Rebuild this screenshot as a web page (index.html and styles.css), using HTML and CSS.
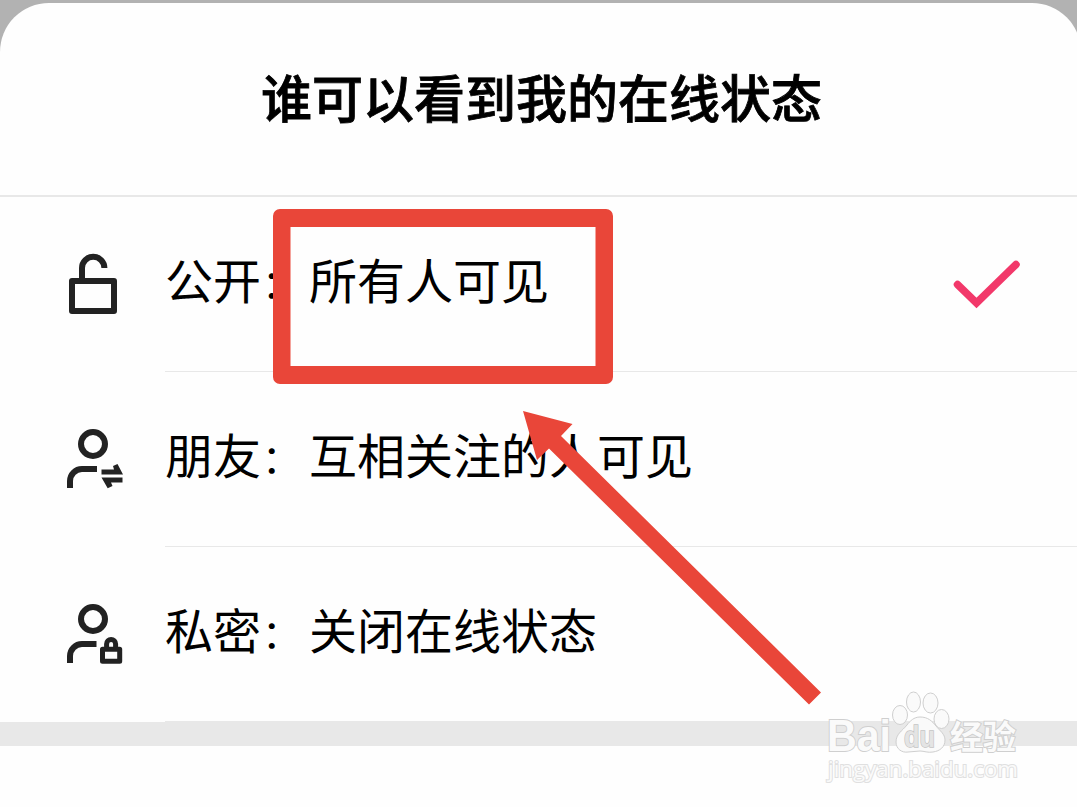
FILE: index.html
```
<!DOCTYPE html>
<html lang="zh-CN">

<head>
    <meta charset="UTF-8" />
    <meta name="viewport" content="width=device-width, initial-scale=1.0" />
    <title>谁可以看到我的在线状态</title>
    <link rel="stylesheet" href="styles.css">
</head>

<body>
    <div class="sheet">
        <div class="header">
            <h1>谁可以看到我的在线状态</h1>
        </div>
        <div class="option">
            <svg class="icon" viewBox="0 0 64 64">
                <rect x="10" y="29" width="42" height="30" />
                <path d="M20 28V16a11.2 11.2 0 0 1 22.4 0" />
            </svg>
            <div class="option-body">
                <div class="label">公开<span class="colon">：</span>所有人可见</div>
                <svg class="check" viewBox="0 0 70 54">
                    <path d="M7.500 28.500l19 18.500L66 8.500" />
                </svg>
            </div>
        </div>
        <div class="option">
            <svg class="icon" viewBox="0 0 64 64">
                <circle cx="31" cy="17" r="12" />
                <path d="M8 61V54a12 12 0 0 1 12-12H35" />
                <path class="solid" d="M39.500 42.500H52l-1-3.500 4.500-2 5.500 10.500H39.500z" />
                <path class="solid" d="M60.500 50.500v5H49l1.500 3.500-4.800 2.200L39.500 50.500z" />
            </svg>
            <div class="option-body">
                <div class="label">朋友<span class="colon">：</span>互相关注的人可见</div>
            </div>
        </div>
        <div class="option">
            <svg class="icon" viewBox="0 0 64 64">
                <circle cx="31" cy="17" r="12" />
                <path d="M8 61V54a12 12 0 0 1 12-12H34.500" />
                <rect class="thin" x="40.500" y="47.200" width="17.200" height="12" />
                <path class="thin" d="M44.600 47V42a4.500 4.500 0 0 1 9 0V47" />
            </svg>
            <div class="option-body">
                <div class="label">私密<span class="colon">：</span>关闭在线状态</div>
            </div>
        </div>
        <div class="gap"></div>
    </div>

    <!-- red box and arrow -->
    <svg class="marks" viewBox="0 0 1077 807">
        <path class="red" fill-rule="evenodd" d="M280 209H606a7 7 0 0 1 7 7V377a7 7 0 0 1-7 7H280a7 7 0 0 1-7-7V216a7 7 0 0 1 7-7zM290.500 227V366H595.500V227z" />
        <polygon class="red" points="523,411 572.500,424 561,436 821,692.500 809,704.500 549,448.500 537,460" />
    </svg>

    <!-- watermark -->
    <svg class="watermark" viewBox="810 680 230 115">
        <text class="brand" x="827" y="751" textLength="64" lengthAdjust="spacingAndGlyphs">Bai</text>
        <ellipse cx="900" cy="715" rx="7.500" ry="9.500" />
        <ellipse cx="913.500" cy="702" rx="7" ry="10" />
        <ellipse cx="930.500" cy="703" rx="7.500" ry="10" />
        <ellipse cx="941.500" cy="719" rx="7.500" ry="9.500" />
        <path d="M920 717c-6 0-10 4-13 8-5 6-11 9-11 17 0 7 6 11 12 10 4 0 8-1 12-1s8 2 13 1c7-1 12-5 12-12 0-6-5-9-9-14s-8-9-16-9z" />
        <text class="du" x="904" y="747" textLength="31" lengthAdjust="spacingAndGlyphs">du</text>
        <text class="cn" x="950" y="749">经验</text>
        <text class="url" x="828" y="777" textLength="190" lengthAdjust="spacingAndGlyphs">jingyan.baidu.com</text>
    </svg>
</body>

</html>
```
FILE: styles.css
```
body {
    position: relative;
    height: 807px;
    margin: 0;
    padding-top: 3px;
    box-sizing: border-box;
    overflow: hidden;
    background-color: #b2b2b2;
    font-family: "Noto Sans CJK SC", sans-serif;
    color: #000;
}

.sheet {
    width: 1081px;
    height: 804px;
    border-radius: 49px 49px 0 0;
    background-color: #fefefe;
}

.header {
    display: flex;
    justify-content: center;
    align-items: center;
    height: 192px;
    padding-left: 2px;
    border-bottom: 2px solid #e8e8e8;
}

h1 {
    margin: 0;
    padding-bottom: 6px;
    font-size: 51px;
    font-weight: 500;
    line-height: 72px;
    -webkit-text-stroke: 0.8px #000;
}

.option {
    display: flex;
    align-items: center;
    height: 175px;
    padding-left: 62px;
}

.icon {
    width: 64px;
    height: 64px;
    margin-right: 39px;
    margin-bottom: 1px;
    fill: none;
    stroke: #222;
    stroke-width: 6;
    stroke-linejoin: round;
}

.icon .thin {
    stroke-width: 5;
}

.icon .solid {
    fill: #222;
    stroke: none;
}

.option-body {
    display: flex;
    flex: 1;
    justify-content: space-between;
    align-items: center;
    height: 175px;
    box-sizing: border-box;
    padding-bottom: 3px;
    border-bottom: 1px solid #e8e8e8;
}

.label {
    height: 70px;
    padding-bottom: 10px;
    font-size: 48px;
    line-height: 70px;
}

.colon {
    display: inline-block;
    width: 48px;
    box-sizing: border-box;
    padding-left: 1px;
    font-size: 39px;
    line-height: 1;
    vertical-align: 1px;
}

.check {
    width: 70px;
    height: 54px;
    margin-right: 61px;
    fill: none;
    stroke: #f2386a;
    stroke-width: 7.5;
    stroke-linecap: round;
}

.gap {
    height: 24px;
    background-color: #e8e8e8;
}

.marks {
    position: absolute;
    top: 0;
    left: 0;
    width: 1077px;
    height: 807px;
}

.red {
    fill: #e94639;
}

.watermark {
    position: absolute;
    top: 680px;
    left: 810px;
    width: 230px;
    height: 115px;
    fill: #fafafa;
    stroke: #cfcfcf;
    stroke-width: 1;
}

.watermark text {
    paint-order: stroke;
    stroke-width: 2;
}

.brand {
    font: bold 45px "Liberation Sans", sans-serif;
}

.watermark .du {
    fill: #e4e4e4;
    stroke: #c4c4c4;
    stroke-width: 1.5;
    font: bold 29px "Liberation Sans", sans-serif;
}

.cn {
    font: bold 33px "Noto Sans CJK SC", sans-serif;
}

.watermark .url {
    stroke: #e0e0e0;
    font: 22px "Open Sans", sans-serif;
}
```
